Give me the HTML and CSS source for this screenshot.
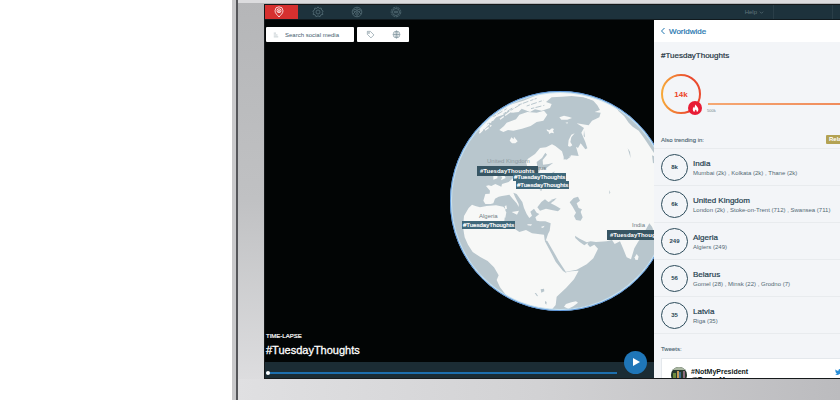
FILE: index.html
```html
<!DOCTYPE html>
<html lang="en">
<head>
<meta charset="utf-8">
<title>Worldwide trends</title>
<link rel="stylesheet" href="styles.css">
</head>
<body>
<div class="laptop">
  <div class="screen">
    <header class="topbar">
      <nav class="tabs">
        <a class="tab active" href="#map" aria-label="Map"><svg viewBox="0 0 12 12"><path d="M6 11C4.500 9 2 7.500 2 4.800a4 4 0 0 1 8 0C10 7.500 7.500 9 6 11z"/><circle cx="6" cy="4.700" r="2"/><path d="M4.600 3.300l2.800 2.800M7.400 3.300L4.600 6.100"/></svg></a>
        <a class="tab" href="#topics" aria-label="Topics"><svg viewBox="0 0 12 12"><path d="M6 .8l1.200 1.600 2-.4.3 2L11.200 5l-.9 1.500.6 1.900-2 .4-.8 1.800L6 9.900l-2.100.7-.8-1.800-2-.4.6-1.900L.8 5l1.700-1 .3-2 2 .4z"/><circle cx="6" cy="6" r="2"/></svg></a>
        <a class="tab" href="#network" aria-label="Network"><svg viewBox="0 0 12 12"><circle cx="6" cy="6" r="4.800"/><circle cx="4" cy="4.500" r="1.300"/><circle cx="8" cy="4.500" r="1.300"/><circle cx="6" cy="8" r="1.300"/><path d="M2 8l2-2M8 6l2 2M6 1.500v5"/></svg></a>
        <a class="tab" href="#settings" aria-label="Settings"><svg viewBox="0 0 12 12"><circle cx="6" cy="6" r="4.800" stroke-dasharray="2 .7"/><circle cx="6" cy="6" r="3.500"/><path d="M4 5.300h4M4 6.700h4"/></svg></a>
      </nav>
      <button class="help" type="button">Help <svg viewBox="0 0 6 6"><path d="M1 2l2 2 2-2"/></svg></button>
      <span class="slot"></span>
    </header>
    <main class="content">
      <section class="map">
        <div class="tools">
          <label class="search">
            <svg viewBox="0 0 8 8"><path d="M1 1.500h3M1 4h5M1 6.500h6"/></svg>
            <input type="text" placeholder="Search social media" aria-label="Search social media">
          </label>
          <div class="filters">
            <button type="button" aria-label="Tags"><svg viewBox="0 0 10 10"><path d="M1.500 1.500h3.300l4 4L5.500 8.800l-4-4z"/><circle cx="3.300" cy="3.300" r=".6"/></svg></button>
            <button type="button" aria-label="Region"><svg viewBox="0 0 10 10"><circle cx="5" cy="5" r="3.800"/><ellipse cx="5" cy="5" rx="1.700" ry="3.800"/><path d="M1.200 5h7.600M5 1.200v7.600"/></svg></button>
          </div>
        </div>
        <div class="globe">
          <svg viewBox="30 33 660 660" aria-hidden="true">
            <defs>
              <clipPath id="disc"><circle cx="360" cy="363" r="326"/></clipPath>
            </defs>
            <circle cx="360" cy="363" r="326" fill="#b8c6cd"/>
            <g clip-path="url(#disc)">
              <g fill="#f7f8f7">
                <path d="M250 62L300 42 380 34 440 42 460 60 430 52 395 48 365 50 335 52 318 66 335 72 330 84 305 92 285 88 270 96 245 86 236 96 215 98 205 92 190 104 168 112 160 122 145 126 138 140 120 160 118 146 150 112 205 76z"/>
                <path d="M178 150L192 138 200 128 228 118 238 104 262 96 290 98 312 92 322 104 310 122 290 126 272 138 246 146 220 152 204 150 190 156z"/>
                <path d="M209 182L214 172 221 178 222 170 228 178 233 184 226 190 216 190z"/>
                <path d="M320 148l8 3 8-6 6 2-3 5 3 8-8-2-7 4-1-7-5-2z"/>
                <path d="M358 112l14-5 16 4 8 3-14 5-18 0zM376 128l8-1-2 4z"/>
                <path d="M384 198L386 180 394 164 404 160 394 172 391 186 397 196 390 200z"/>
                <path d="M175 285l4-10-5-9 8-6 2 12 7 10 6 12-14 7 4-10zM160 288l5-7 8 2-1 12-12 4z"/>
                <path d="M400 40L440 42 520 66 536 78 556 104 570 116 600 142 625 176 640 205 690 280 690 440 650 470 640 450 636 440 628 430 618 448 604 472 594 486 583 505 573 538 560 532 549 505 540 484 524 492 516 480 500 484 468 486 452 484 440 487 419 476 405 467 406 474 419 486 433 496 446 487 442 492 450 501 463 494 474 506 460 535 440 553 410 569 378 575 370 568 354 546 336 512 318 480 324 462 329 452 332 430 316 424 300 424 290 422 286 412 298 402 290 398 282 386 271 395 276 407 268 414 260 402 252 384 247 366 230 342 220 338 225 350 236 372 236 381 230 370 218 356 208 344 200 346 186 348 176 350 165 356 160 370 152 372 136 372 130 362 136 342 149 341 150 332 138 318 146 316 154 318 166 312 184 320 186 312 206 306 222 292 232 296 246 290 252 274 262 288 280 286 296 278 302 264 314 270 322 262 340 248 326 252 309 254 308 240 321 224 316 218 306 234 290 246 292 262 284 272 278 258 262 260 258 246 264 236 285 222 300 204 318 202 336 193 346 198 366 214 372 234 364 252 354 240 378 238 394 226 416 228 408 200 414 204 422 190 436 208 442 205 436 186 424 158 432 144 410 130 446 136 456 122 478 112 482 98 464 96 480 90 472 76 460 62 430 50z"/>
                <path d="M96 374L86 384 72 408 69 442 74 472 84 494 98 516 122 532 143 543 162 562 176 586 170 600 180 622 194 640 220 680 330 695 347 675 350 650 378 624 402 598 416 572 394 574 379 576 370 562 352 538 337 512 314 480 312 464 276 460 258 450 238 456 224 446 212 432 193 424 194 414 196 388 190 380 168 376 140 378 120 382 106 378z"/>
                <path d="M372 680L378 672 394 667 408 664 414 668 400 679 385 686z"/>
                <path d="M584 532l6-10 6 8-3 10-7-1z"/>
                <path d="M190 396l5-5 4 6-3 16-5-1zM194 379l5-3 2 10-5 2zM215 396l22-4-6 12zM262 433l14 0-3 4-10-1zM302 441l12-4-5 7z"/>
              </g>
              <g fill="#b8c6cd">
                <path d="M292 382L304 366 315 358 325 366 334 362 340 364 332 370 347 377 362 386 354 394 335 390 318 386 300 392z"/>
                <path d="M330 361l20-7-9 10z"/>
                <path d="M389 367L401 354 414 350 420 362 410 370 416 384 426 388 422 396 428 412 422 422 408 420 402 408 408 398 398 380z"/>
                <path d="M314 482L322 483 339 512 356 542 374 570 380 580 369 573 347 545 330 512z"/>
                <path d="M302 628l10-2 1 8-9 4zM284 639l4 0 6 9-3 1zM315 663l5 3-1 8-4-4z"/>
                <path d="M334 280l10-6-3 8zM298 329l8-2-2 6z"/>
                <path d="M528 82L540 88 560 98 580 112 602 132 624 160 646 196 662 226 644 222 628 198 612 174 596 152 578 140 566 128 552 108 536 94z"/>
                <path d="M636 226l8 4 4 18-9 2zM563 205l7 10 2 20-4-14zM508 330l3 8-3 4z"/>
                <path d="M370 234l10-10 4 7 10-2-14 10zM432 150l3 22-4-3z"/>
              </g>
              <g fill="none" stroke="#f7f8f7" stroke-width="4">
                <path d="M118 160l36-36M145 128l60-47M180 118l54-40M220 96l48-30M252 84l60-32M135 151l19-15" stroke-dasharray="14 5 22 4"/>
                <path d="M572 112l28 22 22 28 30 46" stroke-width="2"/>
              </g>
              <path d="M160 110l40-24M212 91l34-20M235 75l55-20M260 78l50-17M190 102l30-20M273 86l40-10M440 46l44 14 40 18" fill="none" stroke="#b8c6cd" stroke-width="3" stroke-dasharray="10 4 18 6"/>
            </g>
            <circle cx="360" cy="363" r="327" fill="none" stroke="#c4e0f0" stroke-width="6"/>
            <circle cx="360" cy="363" r="329" fill="none" stroke="#5b94d8" stroke-width="3"/>
          </svg>
          <span class="place uk">United Kingdom</span>
          <span class="place by">Belarus</span>
          <span class="place dz">Algeria</span>
          <span class="place in">India</span>
          <a class="pin pin-uk" href="#uk">#TuesdayThoughts</a>
          <a class="pin small pin-lv" href="#latvia">#TuesdayThoughts</a>
          <a class="pin small pin-by" href="#belarus">#TuesdayThoughts</a>
          <a class="pin small pin-dz" href="#algeria">#TuesdayThoughts</a>
          <a class="pin pin-in" href="#india">#TuesdayThoughts</a>
        </div>
        <div class="caption">
          <p>TIME-LAPSE</p>
          <h1>#TuesdayThoughts</h1>
        </div>
        <div class="timeline">
          <input type="range" min="0" max="100" value="0" aria-label="Time-lapse position">
          <button class="play" type="button" aria-label="Play"><svg viewBox="0 0 10 10"><path d="M2 1l7 4-7 4z"/></svg></button>
        </div>
      </section>
      <aside class="panel">
        <a class="back" href="#worldwide"><svg viewBox="0 0 6 8"><path d="M4.500 1L1.500 4l3 3"/></svg>Worldwide</a>
        <h2>#TuesdayThoughts</h2>
        <div class="volume">
          <div class="ring">
            <svg viewBox="0 0 40 40"><defs><linearGradient id="heat"><stop offset="0" stop-color="#f7a93a"/><stop offset=".7" stop-color="#ea4b2f"/></linearGradient></defs><circle cx="20" cy="20" r="19" fill="none" stroke="url(#heat)" stroke-width="2"/></svg>
            <b>14k</b>
            <span class="flame"><svg viewBox="0 0 10 10"><path d="M5.300.5c.4 2 2.900 3 2.900 5.500A3.100 3.100 0 0 1 6.300 9c.5-1.500-.5-2-1-3-.8 1-1.700 1.700-1.200 3A3.200 3.200 0 0 1 2 6c0-1.400.7-2.200 1.200-3 .3.600.3 1 .8 1.300C4.200 3 4.300 1.500 5.300.5z"/></svg></span>
          </div>
          <div class="chart"><span class="line"></span><small>500k</small></div>
        </div>
        <div class="trending"><h3>Also trending in:</h3><span class="tag">Related</span></div>
        <ul class="places">
          <li><span class="count">8k</span><div><h4>India</h4><p>Mumbai (2k) , Kolkata (2k) , Thane (2k)</p></div></li>
          <li><span class="count">6k</span><div><h4>United Kingdom</h4><p>London (2k) , Stoke-on-Trent (712) , Swansea (711)</p></div></li>
          <li><span class="count">249</span><div><h4>Algeria</h4><p>Algiers (249)</p></div></li>
          <li><span class="count">56</span><div><h4>Belarus</h4><p>Gomel (28) , Minsk (22) , Grodno (7)</p></div></li>
          <li><span class="count">35</span><div><h4>Latvia</h4><p>Riga (35)</p></div></li>
        </ul>
        <h3 class="tweets">Tweets:</h3>
        <article class="tweet">
          <svg class="avatar" viewBox="0 0 16 16"><defs><clipPath id="face"><circle cx="8" cy="8" r="8"/></clipPath></defs><g clip-path="url(#face)"><path fill="#26382d" d="M0 0h16v16H0z"/><path fill="#a9b6a0" d="M0 0h16v3H0z"/><path fill="#6d8a3c" d="M2 6h3v10H2z"/><path fill="#c79a55" d="M6 4h2v7H6z"/><path fill="#3c6d8e" d="M8 5h2v11H8z"/><path fill="#8c6c7c" d="M12 4h2v12h-2z"/></g></svg>
          <div class="who"><b>#NotMyPresident</b><b>@TrumpMoscow</b></div>
          <svg class="bird" viewBox="0 0 24 20"><path d="M24 2.400a10 10 0 0 1-2.800.8A5 5 0 0 0 23.300.5a10 10 0 0 1-3.100 1.200 4.900 4.900 0 0 0-8.400 4.500A14 14 0 0 1 1.700 1a4.900 4.900 0 0 0 1.500 6.600A5 5 0 0 1 1 7a4.900 4.900 0 0 0 3.900 4.900 5 5 0 0 1-2.200.1 4.900 4.900 0 0 0 4.600 3.400A9.900 9.900 0 0 1 0 17.500a14 14 0 0 0 21.500-12.400A10 10 0 0 0 24 2.400z"/></svg>
        </article>
      </aside>
    </main>
  </div>
</div>
</body>
</html>
```
FILE: styles.css
```css
* { box-sizing: border-box; }
body, h1, h2, h3, h4, p, ul { margin: 0; padding: 0; font-weight: normal; }
body {
  background: #fff;
  font-family: "Liberation Sans", Arial, sans-serif;
  font-size: 8px;
  color: #2a4654;
  overflow: hidden;
}
a { color: inherit; text-decoration: none; }
button { padding: 0; border: 0; background: none; font: inherit; color: inherit; }
svg { display: block; flex: none; }

.laptop {
  display: flex;
  height: 100vh;
  margin-left: 232px;
  padding: 4px 0 21px 27px;
  border-left: 4px solid #c9c9cb;
  background:
    linear-gradient(90deg, #e0e0e2, #d2d2d4 50%, #bbbbbe) bottom / 100% 21px no-repeat,
    linear-gradient(#b5b6b8, #c0c1c3 50%, #e0e0e2);
  box-shadow: inset 2px 0 #55565a, inset 0 3px #dcdcde;
}
.screen {
  flex: 1;
  min-width: 0;
  margin-left: 1px;
  display: flex;
  flex-direction: column;
  border: 1px solid #15191b;
  border-right: 0;
  background: #020505;
}

.topbar { display: flex; height: 15px; flex: none; background: #1d323c; border-bottom: 1px solid #10191d; }
.tabs { display: flex; flex: 1; }
.tab { width: 39px; display: flex; align-items: center; justify-content: center; padding-right: 5px; }
.tab svg { width: 12px; height: 12px; fill: none; stroke: #577078; stroke-width: .8; }
.tab.active { width: 33px; margin-right: 3px; background: #d6302f; }
.tab.active svg { stroke: #fff; }
.help { display: flex; align-items: center; gap: 2px; padding-right: 9px; font-size: 6px; color: #60757d; }
.help svg { width: 5px; height: 5px; fill: none; stroke: #60757d; stroke-width: .8; }
.slot { width: 60px; border-left: 1px solid #2a3e48; border-right: 1px solid #2a3e48; margin-right: 7px; }

.content { flex: 1; min-height: 0; display: flex; }
.map { flex: 1; min-width: 0; position: relative; overflow: hidden; display: flex; flex-direction: column; justify-content: space-between; }
.tools { display: flex; gap: 3px; padding: 7px 1px; position: relative; z-index: 1; }
.search, .filters { height: 15px; display: flex; align-items: center; background: #fff; border-radius: 1px; }
.search { width: 88px; padding-left: 7px; gap: 6px; }
.search svg { width: 6px; height: 6px; fill: none; stroke: #9eacb4; stroke-width: .8; }
.search input { flex: 1; min-width: 0; border: 0; padding: 0; outline: 0; background: none; font: 6px "Liberation Sans", Arial, sans-serif; color: #45606e; }
.search input::placeholder { color: #45606e; opacity: 1; }
.filters { width: 52px; }
.filters button { flex: 1; display: flex; justify-content: center; }
.filters svg { width: 9px; height: 9px; fill: none; stroke: #607a86; stroke-width: .6; }

.globe { position: absolute; top: 71px; right: -16px; width: 220px; }
.globe > svg { width: 220px; height: 220px; }
.place { position: absolute; font-size: 6px; line-height: 8px; color: #6f7d84; white-space: nowrap; }
.uk { left: 37px; top: 66px; color: #8d9ba2; }
.by { left: 76px; top: 73px; }
.dz { left: 29px; top: 121px; }
.in { left: 182px; top: 130px; }
.pin { position: absolute; padding: 0 3px; font-size: 6px; font-weight: bold; line-height: 10px; color: #fff; background: #375563; }
.pin.small { padding: 0 1px; font-weight: normal; line-height: 8px; background: #3f687a; -webkit-text-stroke: .2px #fff; }
.pin-uk { left: 27px; top: 75px; }
.pin-lv { left: 63px; top: 82px; }
.pin-by { left: 66px; top: 90px; }
.pin-dz { left: 12px; top: 130px; }
.pin-in { left: 157px; top: 139px; }

.caption { margin-top: auto; padding: 0 1px 5px; color: #fff; position: relative; }
.caption p { font-size: 6px; line-height: 8px; margin-bottom: 3px; -webkit-text-stroke: .2px #fff; }
.caption h1 { font-size: 11px; line-height: 14px; -webkit-text-stroke: .3px #fff; }
.timeline { flex: none; height: 16px; display: flex; align-items: center; gap: 7px; padding: 0 7px 0 1px; background: #1b2c34; position: relative; }
.timeline input { appearance: none; flex: 1; min-width: 0; height: 4px; margin: 6px 0 0; border-radius: 1px; background: linear-gradient(#1d6fae, #1d6fae) center / 100% 2px no-repeat; }
.timeline input::-webkit-slider-thumb { appearance: none; width: 4px; height: 4px; border-radius: 50%; background: #fff; }
.play { width: 23px; height: 23px; flex: none; margin-top: -16px; border-radius: 50%; background: #1f76b8; display: flex; align-items: center; justify-content: center; }
.play svg { width: 10px; height: 10px; fill: #fff; }

.panel { width: 186px; flex: none; overflow: hidden; background: #f3f5f8; }
.back { display: flex; align-items: center; gap: 3px; height: 22px; padding-left: 6px; background: #fff; color: #1f76b0; -webkit-text-stroke: .2px #1f76b0; }
.back svg { width: 6px; height: 8px; fill: none; stroke: #1f76b0; stroke-width: 1; }
.panel h2 { padding: 7px 7px 0; font-size: 8px; line-height: 14px; color: #1e343f; -webkit-text-stroke: .2px #1e343f; }
.volume { display: flex; gap: 7px; height: 60px; padding: 11px 0 0 7px; }
.ring { width: 40px; height: 40px; flex: none; position: relative; display: flex; align-items: center; justify-content: center; color: #ec4327; }
.ring > svg { position: absolute; inset: 0; width: 40px; height: 40px; }
.flame { position: absolute; right: -1px; bottom: -1px; width: 14px; height: 14px; border-radius: 50%; background: #e81c35; display: flex; align-items: center; justify-content: center; }
.flame svg { width: 9px; height: 9px; fill: #fff; }
.chart { flex: 1; padding-top: 29px; }
.line { display: block; height: 2px; background: linear-gradient(90deg, #f5a873, #f08c5c); }
.chart small { display: block; margin: 4px 0 0 -1px; font-size: 4px; line-height: 4px; color: #74838b; }
.trending { display: flex; justify-content: space-between; height: 26px; padding-left: 7px; overflow: hidden; border-bottom: 1px solid #e8ebee; }
.panel h3 { font-size: 6px; line-height: 8px; color: #45606d; -webkit-text-stroke: .1px #45606d; }
.trending h3 { padding-top: 13px; }
.tag { width: 14px; height: 9px; margin-top: 12px; padding-left: 3px; overflow: hidden; border-radius: 1px 0 0 1px; background: #b3a253; color: #fff; font-size: 6px; font-weight: bold; line-height: 9px; }
.places { list-style: none; }
.places li { display: flex; align-items: center; gap: 5px; height: 37px; padding-left: 7px; border-bottom: 1px solid #e8ebee; }
.count { width: 27px; height: 27px; flex: none; display: flex; align-items: center; justify-content: center; border: 1px solid #2c4b5a; border-radius: 50%; font-size: 6px; font-weight: bold; }
.places h4 { font-size: 8px; line-height: 11px; color: #1e3e4e; -webkit-text-stroke: .2px #1e3e4e; white-space: nowrap; }
.places p { font-size: 6px; line-height: 8px; color: #526974; white-space: nowrap; }
.panel .tweets { padding: 11px 7px 5px; }
.tweet { display: flex; gap: 4px; height: 60px; margin-left: 7px; padding: 8px 0 0 9px; border: 1px solid #e4e8ec; border-right: 0; background: #fff; }
.avatar { width: 16px; height: 16px; }
.who { flex: 1; font-size: 7px; line-height: 8px; color: #111b20; padding-top: 1px; }
.who b { display: block; }
.bird { width: 7px; height: 6px; margin: 2px -2px 0 0; fill: #2b8fd8; }
```
